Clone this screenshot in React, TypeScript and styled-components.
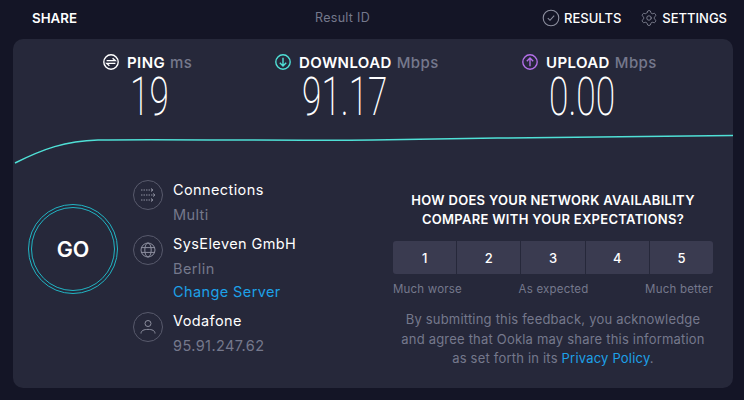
import React from 'react'
import styled, { createGlobalStyle } from 'styled-components'
import { Settings } from 'lucide-react'

const Global = createGlobalStyle`
  html, body {
    margin: 0;
    background: #141526;
  }
  body {
    font-family: Inter, "Noto Sans", sans-serif;
    color: #fff;
  }
`
const Page = styled.div`
  width: 744px;
  height: 400px;
  overflow: hidden;
  background: #141526;
`
const TopBar = styled.div`
  height: 39px;
  display: grid;
  grid-template-columns: 283px 80px 1fr;
  align-items: center;
  padding: 0 17px 4px 32px;
  box-sizing: border-box;
`
const TopTitle = styled.span`
  font-size: 13.3px;
  font-weight: 600;
`
const ResultId = styled.span`
  font-size: 12.5px;
  color: #75788c;
  letter-spacing: 0.3px;
`
const TopLinks = styled.div`
  display: flex;
  justify-content: flex-end;
  align-items: center;
  margin-top: 1px;
`
const TopLink = styled.span`
  display: flex;
  align-items: center;
  gap: 4px;
  margin-left: 19px;
  font-size: 13px;
  font-weight: 500;
`
const Panel = styled.div`
  width: 720px;
  height: 349px;
  margin-left: 13px;
  background: #26283a;
  border-radius: 10px;
  overflow: hidden;
`
const Stats = styled.div`
  display: flex;
  height: 80px;
  padding: 15px 0 0 90px;
  box-sizing: border-box;
`
const Stat = styled.div<{ $width: number }>`
  width: ${p => p.$width}px;
`
const StatLabel = styled.div`
  display: flex;
  align-items: center;
  gap: 8px;
  height: 16px;
  font-size: 15px;
  font-weight: 600;
  letter-spacing: 0.4px;
`
const Unit = styled.span`
  color: #75788c;
  font-weight: 500;
  margin-left: 5px;
`
const StatValue = styled.div`
  margin: 2px 0 0 27px;
  font-family: Roboto, sans-serif;
  font-weight: 200;
  font-size: 53px;
  line-height: 50px;
  transform: scaleX(0.665);
  transform-origin: left center;
`
const Graph = styled.svg`
  display: block;
  width: 720px;
  height: 50px;
`
const Bottom = styled.div`
  display: flex;
  padding-top: 10px;
`
const GoColumn = styled.div`
  width: 120px;
  padding: 25px 0 0 15px;
  box-sizing: border-box;
`
const GoOuter = styled.div`
  width: 90px;
  height: 90px;
  border-radius: 50%;
  border: 1px solid #22b5c4;
  box-sizing: border-box;
  padding: 2px;
`
const GoInner = styled.div`
  width: 100%;
  height: 100%;
  border-radius: 50%;
  border: 1px solid #22b5c4;
  box-sizing: border-box;
  display: flex;
  align-items: center;
  justify-content: center;
  font-size: 21.5px;
  font-weight: 600;
  background: #26283a;
`
const Details = styled.div`
  width: 230px;
  padding-top: 1px;
`
const DetailRow = styled.div<{ $height: number }>`
  display: flex;
  gap: 10px;
  height: ${p => p.$height}px;
`
const RoundIcon = styled.div`
  width: 30px;
  height: 30px;
  flex: none;
  border-radius: 50%;
  border: 1px solid #585a6c;
  box-sizing: border-box;
  display: flex;
  align-items: center;
  justify-content: center;
`
const DetailText = styled.div<{ $lift?: boolean }>`
  display: flex;
  flex-direction: column;
  margin-top: ${p => (p.$lift ? -1 : 0)}px;
  font-size: 14.5px;
  letter-spacing: 0.4px;
`
const DetailLine = styled.span<{ $tone?: 'muted' | 'link' }>`
  height: 25px;
  margin-top: ${p => (p.$tone === 'link' ? -2 : 0)}px;
  line-height: 20px;
  color: ${p => (p.$tone === 'muted' ? '#75788c' : p.$tone === 'link' ? '#1da1e8' : '#fff')};
`
const Survey = styled.div`
  width: 320px;
  margin-left: 30px;
  padding-top: 12px;
  text-align: center;
`
const SurveyTitle = styled.div`
  font-size: 13px;
  font-weight: 600;
  line-height: 19px;
  letter-spacing: 0.3px;
  white-space: nowrap;
`
const Scale = styled.div`
  display: grid;
  grid-template-columns: repeat(5, 1fr);
  gap: 1px;
  height: 33px;
  margin-top: 12px;
  border-radius: 3px;
  overflow: hidden;
`
const ScaleButton = styled.div`
  background: #3a3b50;
  display: flex;
  align-items: center;
  justify-content: center;
  font-size: 13px;
  font-weight: 500;
`
const ScaleLabels = styled.div`
  display: flex;
  justify-content: space-between;
  margin-top: 7px;
  font-size: 11.5px;
  line-height: 16px;
  color: #75788c;
  letter-spacing: 0.2px;
`
const Legal = styled.div`
  margin-top: 13px;
  font-size: 13px;
  line-height: 19.5px;
  color: #75788c;
  letter-spacing: 0.2px;
  white-space: nowrap;
`
const LegalLink = styled.span`
  color: #1da1e8;
`

const PingIcon = () => (
  <svg width="16" height="16" viewBox="0 0 16 16" fill="none" stroke="#fff" strokeWidth="1.4">
    <circle cx="8" cy="8" r="7.2" />
    <path d="M3.6 6.600h8.600L9.600 4.200M12.400 9.400H3.800l2.600 2.400" />
  </svg>
)
const ArrowIcon = ({ color, up }: { color: string; up?: boolean }) => (
  <svg width="16" height="16" viewBox="0 0 16 16" fill="none" stroke={color} strokeWidth="1.4">
    <circle cx="8" cy="8" r="7.2" />
    {up ? <path d="M8 12.200V4.200M4.800 7.200 8 4l3.200 3.200" /> : <path d="M8 3.800v8M4.800 8.800 8 12l3.200-3.200" />}
  </svg>
)
const CheckIcon = () => (
  <svg width="18" height="18" viewBox="0 0 18 18" fill="none" stroke="#8d8f9f" strokeWidth="1.1">
    <circle cx="9" cy="9" r="7.800" />
    <path d="M5.800 9.200 8 11.300l4.200-4.600" />
  </svg>
)
const ConnectionsIcon = () => (
  <svg width="16" height="14" viewBox="0 0 16 14" fill="none" stroke="#8d8f9f" strokeWidth="1">
    <path d="M1 2h11" strokeDasharray="1.500 1" />
    <path d="M1 7h13" strokeDasharray="1.500 1" />
    <path d="M1 12h11" strokeDasharray="1.500 1" />
    <path d="M11 .5 13 2l-2 1.500M13 5.500 15 7l-2 1.500M11 10.500l2 1.500-2 1.500" />
  </svg>
)
const GlobeIcon = () => (
  <svg width="16" height="16" viewBox="0 0 16 16" fill="none" stroke="#8d8f9f" strokeWidth="1">
    <circle cx="8" cy="8" r="7" />
    <ellipse cx="8" cy="8" rx="3.200" ry="7" />
    <path d="M1 5.600h14M1 10.400h14" />
  </svg>
)
const PersonIcon = () => (
  <svg width="16" height="16" viewBox="0 0 16 16" fill="none" stroke="#8d8f9f" strokeWidth="1">
    <circle cx="8" cy="4.500" r="3" />
    <path d="M1 14.500c0-3 3-4.100 7-4.100s7 1.100 7 4.100" />
  </svg>
)

export default function App() {
  return (
    <Page>
      <Global />
      <TopBar>
        <TopTitle>SHARE</TopTitle>
        <ResultId>Result ID</ResultId>
        <TopLinks>
          <TopLink>
            <CheckIcon />
            RESULTS
          </TopLink>
          <TopLink>
            <Settings size={18} strokeWidth={1.1} color="#8d8f9f" />
            SETTINGS
          </TopLink>
        </TopLinks>
      </TopBar>
      <Panel>
        <Stats>
          <Stat $width={172}>
            <StatLabel>
              <PingIcon />
              <span>
                PING<Unit>ms</Unit>
              </span>
            </StatLabel>
            <StatValue>19</StatValue>
          </Stat>
          <Stat $width={247}>
            <StatLabel>
              <ArrowIcon color="#4fe0d6" />
              <span>
                DOWNLOAD<Unit>Mbps</Unit>
              </span>
            </StatLabel>
            <StatValue>91.17</StatValue>
          </Stat>
          <Stat $width={200}>
            <StatLabel>
              <ArrowIcon color="#b36fe8" up />
              <span>
                UPLOAD<Unit>Mbps</Unit>
              </span>
            </StatLabel>
            <StatValue>0.00</StatValue>
          </Stat>
        </Stats>
        <Graph viewBox="0 0 720 50">
          <path
            d="M2 44 C30 30 52 22 85 21 C160 20 280 22 360 21 C480 19 620 17 720 16.500"
            fill="none"
            stroke="#4fe0d6"
            strokeWidth="1.5"
          />
        </Graph>
        <Bottom>
          <GoColumn>
            <GoOuter>
              <GoInner>GO</GoInner>
            </GoOuter>
          </GoColumn>
          <Details>
            <DetailRow $height={55}>
              <RoundIcon>
                <ConnectionsIcon />
              </RoundIcon>
              <DetailText>
                <DetailLine>Connections</DetailLine>
                <DetailLine $tone="muted">Multi</DetailLine>
              </DetailText>
            </DetailRow>
            <DetailRow $height={77}>
              <RoundIcon>
                <GlobeIcon />
              </RoundIcon>
              <DetailText $lift>
                <DetailLine>SysEleven GmbH</DetailLine>
                <DetailLine $tone="muted">Berlin</DetailLine>
                <DetailLine $tone="link">Change Server</DetailLine>
              </DetailText>
            </DetailRow>
            <DetailRow $height={55}>
              <RoundIcon>
                <PersonIcon />
              </RoundIcon>
              <DetailText $lift>
                <DetailLine>Vodafone</DetailLine>
                <DetailLine $tone="muted">95.91.247.62</DetailLine>
              </DetailText>
            </DetailRow>
          </Details>
          <Survey>
            <SurveyTitle>
              HOW DOES YOUR NETWORK AVAILABILITY
              <br />
              COMPARE WITH YOUR EXPECTATIONS?
            </SurveyTitle>
            <Scale>
              {[1, 2, 3, 4, 5].map(n => (
                <ScaleButton key={n}>{n}</ScaleButton>
              ))}
            </Scale>
            <ScaleLabels>
              <span>Much worse</span>
              <span>As expected</span>
              <span>Much better</span>
            </ScaleLabels>
            <Legal>
              By submitting this feedback, you acknowledge
              <br />
              and agree that Ookla may share this information
              <br />
              as set forth in its <LegalLink>Privacy Policy</LegalLink>.
            </Legal>
          </Survey>
        </Bottom>
      </Panel>
    </Page>
  )
}
